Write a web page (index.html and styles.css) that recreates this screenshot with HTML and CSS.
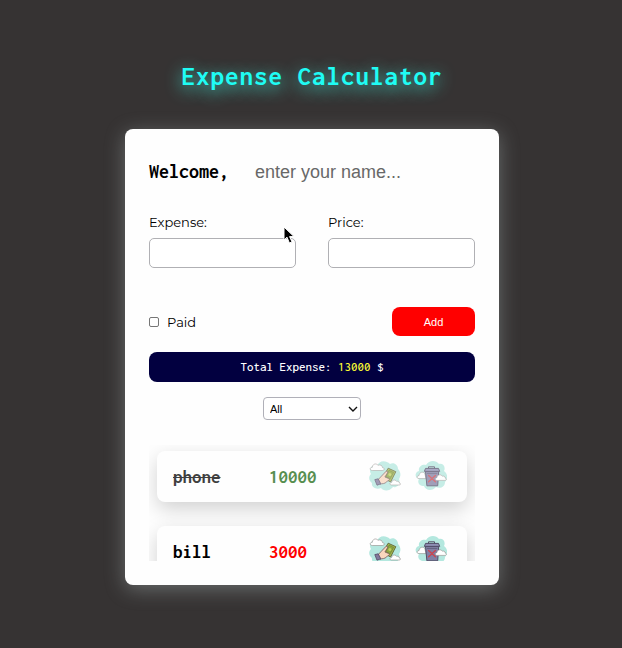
FILE: index.html
```html
<!DOCTYPE html>
<html lang="en">
<head>
<meta charset="utf-8">
<meta name="viewport" content="width=device-width, initial-scale=1">
<title>Expense Calculator</title>
<link rel="stylesheet" href="styles.css">
</head>
<body>
<svg class="sprite" aria-hidden="true">
  <symbol id="pay" viewBox="0 0 32 32">
    <path fill="#b4e8df" d="M2 13C-1 8 3 3 8 5c2-6 9-6 13-2 4-2 8 1 8 5 3 3 3 7 1 10 2 5-2 9-6 8-4 5-10 4-12 1-5 2-10-1-9-5-3-2-4-6-1-9z"/>
    <path fill="#a3b84a" stroke="#5c6136" stroke-width=".9" stroke-linejoin="round" d="M19.2 7.2l7.6 3.5-5.2 10.3-8-4.4z"/>
    <path fill="#8da53f" stroke="#647a35" stroke-width=".6" d="M20 9.2l4.6 2.2-3.4 6.4-4.4-2.2z"/>
    <circle cx="20.9" cy="13.4" r="1.5" fill="#bfd05f"/>
    <path fill="#f9d6bd" stroke="#75585c" stroke-width=".8" stroke-linejoin="round" d="M9 18.8l3.4-3.6 4.4-4.6c1.2-1 2.4.2 1.6 1.4l-2.5 4 3.6 1.4c1.5.8.8 2.3-.6 2.2-1.6 2.2-3.8 3.2-6.4 3.2l-1.3.5z"/>
    <path fill="#817a9c" stroke="#544a67" stroke-width=".8" stroke-linejoin="round" d="M5.8 18.6l3.4-.8 2.6 5-3.8 1.4z"/>
    <path fill="#fff" stroke="#908988" stroke-width=".6" stroke-linejoin="round" d="M3.5 9.5C.5 9.5.5 6.3 3.3 6.3 3.5 3 7 1.8 9 4.3c2.4-1 4.4.3 4.5 2.3 2.4.2 2.2 2.9-.2 2.9z"/>
    <path fill="#fff" stroke="#908988" stroke-width=".6" stroke-linejoin="round" d="M22.6 24c-2.2 0-2.2-2.5 0-2.5.3-2.6 3.6-3.3 4.9-1.2 1.8-.4 2.8.6 2.8 1.7 1.9.4 1.5 2-.1 2z"/>
  </symbol>
  <symbol id="trash" viewBox="0 0 32 32">
    <path fill="#b4e8df" d="M4 10c-1-4 3-7 7-6 3-5 10-5 13-1 4-1 7 3 5 7 4 3 4 8 1 11 0 5-5 7-9 5-4 5-11 3-12-1-5 0-7-4-5-7-5-2-4-7 0-8z"/>
    <path fill="#fff" stroke="#908988" stroke-width=".6" d="M4 17.6c-2.5 0-2.5-3 0-3 .4-3.6 4-4.4 5.8-2.2l1.2 5.2z"/>
    <path fill="none" stroke="#544f67" stroke-width="1" d="M13.5 7.5V5.8h6v1.7"/>
    <path fill="#817fa3" stroke="#514c67" stroke-width="1" stroke-linejoin="round" d="M10.5 10.5h13.2l-1 14.3H11.9z"/>
    <path fill="#8f8eb3" stroke="#514c67" stroke-width="1" stroke-linejoin="round" d="M10.5 7.4h13l1.2 3H9.4z"/>
    <path fill="none" stroke="#62607e" d="M12 12.4h10.3"/>
    <path fill="none" stroke="#c84650" stroke-width="1.4" stroke-linecap="round" d="M13.6 14.5l6.8 6.3M20.4 14.5l-6.8 6.3"/>
    <path fill="#fff" stroke="#908988" stroke-width=".6" d="M22 19.4c-2.1 0-2.3-2.6-.1-2.7.1-3.1 4-3.9 5.4-1.5 1.9-.5 3 .7 2.9 1.9 1.9.5 1.3 2.3-.3 2.3z"/>
  </symbol>
</svg>
<h1 class="title">Expense Calculator</h1>
<main class="card">
  <div class="welcome">
    <label class="hello" for="name">Welcome,</label>
    <input class="name" id="name" type="text" placeholder="enter your name...">
  </div>
  <form>
    <div class="fields">
      <div class="field">
        <label for="expense">Expense:</label>
        <input class="box" id="expense" type="text">
      </div>
      <div class="field">
        <label for="price">Price:</label>
        <input class="box" id="price" type="text">
      </div>
    </div>
    <div class="actions">
      <label class="paid"><input class="tick" type="checkbox">Paid</label>
      <button class="add" type="button">Add</button>
    </div>
  </form>
  <p class="total">Total Expense: <span class="sum">13000</span> $</p>
  <div class="filter">
    <select class="choice" aria-label="Filter">
      <option>All</option>
      <option>Paid</option>
      <option>Unpaid</option>
    </select>
    <svg class="chevron" viewBox="0 0 10 6" aria-hidden="true"><path d="M1 1l4 4 4-4" fill="none" stroke="#111" stroke-width="1.4"/></svg>
  </div>
  <ul class="list">
    <li class="item done">
      <span class="what">phone</span>
      <span class="cost">10000</span>
      <button class="icon" type="button" aria-label="Pay phone"><svg><use href="#pay"/></svg></button>
      <button class="icon" type="button" aria-label="Delete phone"><svg><use href="#trash"/></svg></button>
    </li>
    <li class="item">
      <span class="what">bill</span>
      <span class="cost">3000</span>
      <button class="icon" type="button" aria-label="Pay bill"><svg><use href="#pay"/></svg></button>
      <button class="icon" type="button" aria-label="Delete bill"><svg><use href="#trash"/></svg></button>
    </li>
  </ul>
  <svg class="pointer" viewBox="0 0 12 18" aria-hidden="true"><path d="M1 1v13l3-2.8L6.4 17l2.6-1.1-2.4-5.3H11z" fill="#000" stroke="#fff"/></svg>
</main>
</body>
</html>
```
FILE: styles.css
```css
* {
  box-sizing: border-box;
}

body {
  margin: 0;
  min-height: 100vh;
  padding: 60px 123px 61px 125px;
  background: #363333;
  font-family: Montserrat, Inter, sans-serif;
  font-size: 13px;
  line-height: 20px;
  color: #000;
}

.sprite {
  display: none;
}

.title {
  margin: 0 0 37px;
  font: bold 27px/32px Inconsolata, "DejaVu Sans Mono", monospace;
  letter-spacing: 1px;
  color: #1ffcf4;
  text-align: center;
  text-shadow: 0 4px 16px #40e0d0;
}

.card {
  position: relative;
  padding: 24px;
  border-radius: 8px;
  background: #fefefe;
  box-shadow: 0 4px 20px rgba(200, 215, 215, 0.35);
}

.welcome {
  display: flex;
  align-items: center;
  gap: 24px;
  height: 38px;
  margin-bottom: 21px;
}

.hello {
  font: bold 20px/24px Inconsolata, "DejaVu Sans Mono", monospace;
}

.name {
  flex: 1;
  min-width: 0;
  border: 0;
  padding: 0 2px;
  background: none;
  font: 18px/24px "Liberation Sans", sans-serif;
}

.name::placeholder {
  color: #686868;
}

.fields {
  display: grid;
  grid-template-columns: 1fr 1fr;
  gap: 32px;
  margin-bottom: 39px;
}

.field {
  display: grid;
  gap: 6px;
}

.box {
  width: 100%;
  height: 30px;
  border: 1px solid #b0b0b4;
  border-radius: 5px;
  padding: 0 8px;
  background: #fff;
}

.actions {
  display: flex;
  align-items: center;
  justify-content: space-between;
  margin-bottom: 16px;
}

.paid {
  display: flex;
  align-items: center;
  gap: 8px;
}

.tick {
  appearance: none;
  width: 10px;
  height: 10px;
  margin: 0;
  border: 1px solid #767676;
  border-radius: 2px;
}

.tick:checked {
  background: #0075ff;
}

.add {
  width: 83px;
  height: 29px;
  border: 0;
  border-radius: 8px;
  background: #f00;
  color: #fff;
  font: 11px/16px "Liberation Sans", sans-serif;
}

.total {
  margin: 0 0 15px;
  padding: 5px;
  border-radius: 8px;
  background: #020040;
  color: #fff;
  font: 500 13px/20px Inconsolata, "DejaVu Sans Mono", monospace;
  text-align: center;
}

.sum {
  color: #ff3;
}

.filter {
  position: relative;
  width: 98px;
  margin: 0 auto 25px;
}

.choice {
  appearance: none;
  display: block;
  width: 100%;
  height: 23px;
  border: 1px solid #b0b0b8;
  border-radius: 4px;
  padding: 0 20px 0 6px;
  background: #fff;
  color: #000;
  font: 11px/16px "Liberation Sans", sans-serif;
}

.chevron {
  position: absolute;
  top: 9px;
  right: 3px;
  width: 10px;
  height: 6px;
  pointer-events: none;
}

.list {
  display: grid;
  gap: 24px;
  align-content: start;
  height: 116px;
  margin: 0;
  padding: 6px 8px;
  overflow: hidden;
  list-style: none;
}

.item {
  display: grid;
  grid-template-columns: 82px 1fr 32px 32px;
  column-gap: 14px;
  align-items: center;
  height: 51px;
  padding: 0 20px 0 16px;
  border-radius: 8px;
  background: #fefefe;
  box-shadow: 0 7px 20px rgba(0, 0, 0, 0.18);
  font: bold 19px/24px Inconsolata, "DejaVu Sans Mono", monospace;
}

.cost {
  color: #f00;
}

.done > * {
  opacity: 0.75;
}

.done .what {
  text-decoration: line-through;
}

.done .cost {
  color: #1f6b14;
}

.icon {
  width: 32px;
  height: 32px;
  border: 0;
  padding: 0;
  background: none;
}

.icon svg {
  display: block;
  width: 32px;
  height: 32px;
}

.pointer {
  position: absolute;
  top: 97px;
  left: 158px;
  width: 12px;
  height: 18px;
}

@media (max-width: 560px) {
  body {
    padding-right: 24px;
    padding-left: 24px;
  }
}
```
